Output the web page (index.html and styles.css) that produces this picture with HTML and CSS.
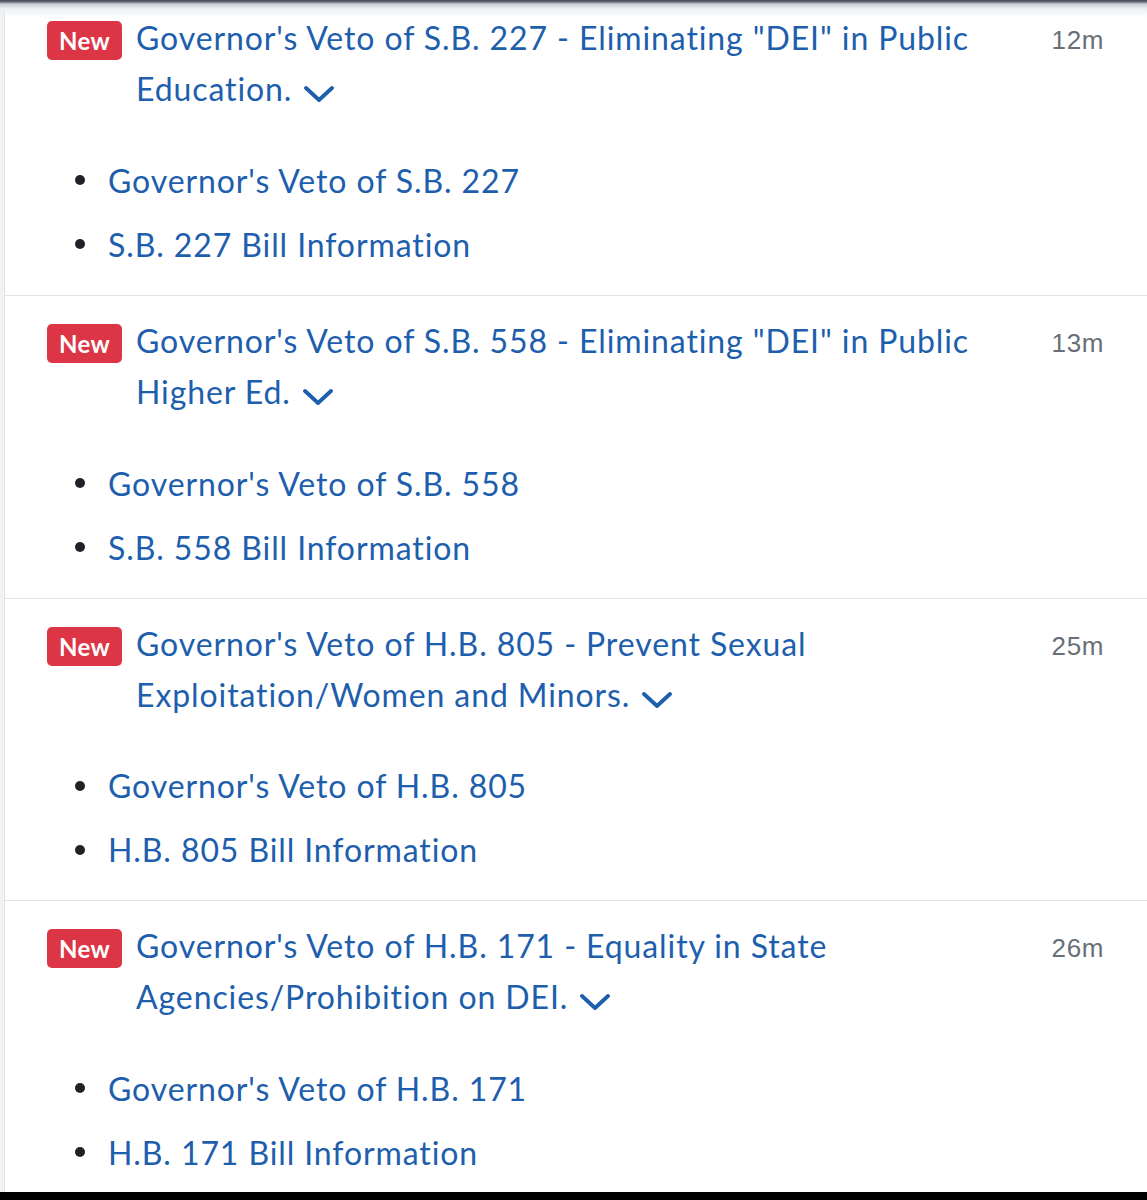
FILE: index.html
```html
<!DOCTYPE html>
<html lang="en">
<head>
<meta charset="utf-8">
<title>Governor's Vetoes</title>
<link rel="stylesheet" href="styles.css">
</head>
<body>
<div class="topshade"></div>
<main class="feed">
  <section class="item first">
    <div class="head">
      <span class="badge">New</span>
      <a class="title" href="#">Governor's Veto of S.B. 227 - Eliminating "DEI" in Public Education.<svg class="chev" viewBox="0 0 30 16" width="30" height="16"><polyline points="2,2 15,14 28,2" fill="none" stroke="currentColor" stroke-width="3.8" stroke-linecap="round" stroke-linejoin="round"/></svg></a>
      <span class="time">12m</span>
    </div>
    <ul class="links">
      <li><a href="#">Governor's Veto of S.B. 227</a></li>
      <li><a href="#">S.B. 227 Bill Information</a></li>
    </ul>
  </section>
  <section class="item">
    <div class="head">
      <span class="badge">New</span>
      <a class="title" href="#">Governor's Veto of S.B. 558 - Eliminating "DEI" in Public Higher Ed.<svg class="chev" viewBox="0 0 30 16" width="30" height="16"><polyline points="2,2 15,14 28,2" fill="none" stroke="currentColor" stroke-width="3.8" stroke-linecap="round" stroke-linejoin="round"/></svg></a>
      <span class="time">13m</span>
    </div>
    <ul class="links">
      <li><a href="#">Governor's Veto of S.B. 558</a></li>
      <li><a href="#">S.B. 558 Bill Information</a></li>
    </ul>
  </section>
  <section class="item">
    <div class="head">
      <span class="badge">New</span>
      <a class="title" href="#">Governor's Veto of H.B. 805 - Prevent Sexual Exploitation/Women and Minors.<svg class="chev" viewBox="0 0 30 16" width="30" height="16"><polyline points="2,2 15,14 28,2" fill="none" stroke="currentColor" stroke-width="3.8" stroke-linecap="round" stroke-linejoin="round"/></svg></a>
      <span class="time">25m</span>
    </div>
    <ul class="links">
      <li><a href="#">Governor's Veto of H.B. 805</a></li>
      <li><a href="#">H.B. 805 Bill Information</a></li>
    </ul>
  </section>
  <section class="item">
    <div class="head">
      <span class="badge">New</span>
      <a class="title" href="#">Governor's Veto of H.B. 171 - Equality in State Agencies/Prohibition on DEI.<svg class="chev" viewBox="0 0 30 16" width="30" height="16"><polyline points="2,2 15,14 28,2" fill="none" stroke="currentColor" stroke-width="3.8" stroke-linecap="round" stroke-linejoin="round"/></svg></a>
      <span class="time">26m</span>
    </div>
    <ul class="links">
      <li><a href="#">Governor's Veto of H.B. 171</a></li>
      <li><a href="#">H.B. 171 Bill Information</a></li>
    </ul>
  </section>
</main>
<div class="bottombar"></div>
</body>
</html>
```

FILE: styles.css
```css
html, body {
  margin: 0;
  padding: 0;
}
body {
  background: #f1f2f4;
  font-family: Lato, "Noto Sans", sans-serif;
  height: 1200px;
  overflow: hidden;
  position: relative;
}
.topshade {
  position: absolute;
  top: 0;
  left: 0;
  right: 0;
  height: 18px;
  background: linear-gradient(to bottom, #3e444c 0, #6b727c 2px, #c9ced6 4px, #eef0f4 9px, rgba(255,255,255,0) 18px);
  pointer-events: none;
  z-index: 2;
}
.feed {
  margin-left: 4px;
  border-left: 1px solid #dfe2e6;
  background: #ffffff;
  height: 1192px;
  overflow: hidden;
}
.item {
  border-bottom: 1px solid #e2e4e7;
  padding: 19px 0 18.5px 42px;
}
.item.first {
  padding-top: 12px;
  padding-bottom: 19px;
}
.head {
  display: flex;
  align-items: flex-start;
}
.badge {
  flex: none;
  width: 75px;
  height: 39px;
  margin-top: 9px;
  border-radius: 5px;
  background: #dc3545;
  color: #ffffff;
  font-weight: 700;
  font-size: 24px;
  display: flex;
  align-items: center;
  justify-content: center;
  letter-spacing: 0.3px;
}
.title {
  flex: 1;
  margin-left: 14px;
  color: #1d5ead;
  font-size: 32px;
  letter-spacing: 0.9px;
  line-height: 51px;
  text-decoration: none;
  padding-right: 18px;
}
.chev {
  margin-left: 12px;
  vertical-align: -1px;
}
.time {
  flex: none;
  width: 98px;
  padding-right: 43px;
  text-align: right;
  color: #6a6f77;
  font-family: "Liberation Sans", Arial, sans-serif;
  font-size: 26px;
  letter-spacing: 0.6px;
  line-height: 51px;
  padding-top: 3px;
}
.links {
  list-style: none;
  margin: 34px 0 0 0;
  padding: 0 0 0 28px;
}
.links li {
  display: flex;
  align-items: center;
  height: 64px;
}
.links li::before {
  content: "";
  width: 10px;
  height: 10px;
  border-radius: 50%;
  background: #1f2328;
  margin-right: 23px;
  flex: none;
}
.links a {
  color: #1d5ead;
  font-size: 32px;
  letter-spacing: 0.9px;
  text-decoration: none;
}
.bottombar {
  height: 8px;
  background: #000000;
}
```
